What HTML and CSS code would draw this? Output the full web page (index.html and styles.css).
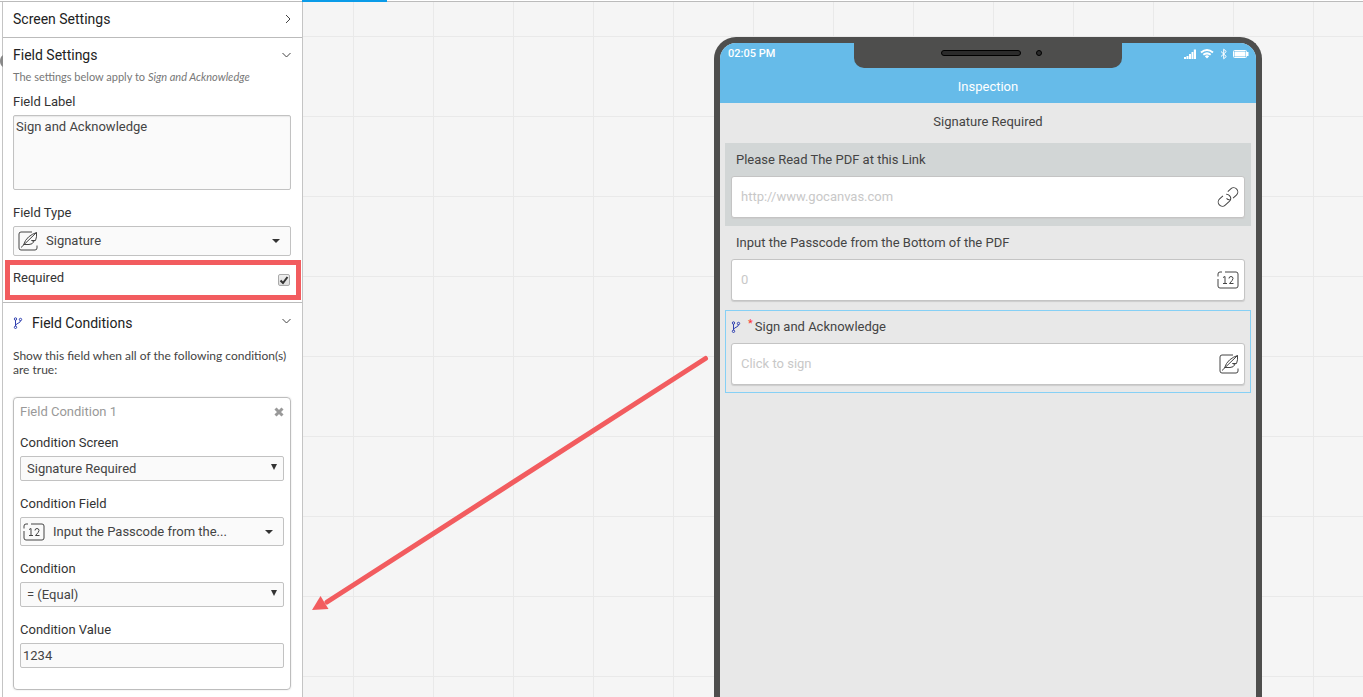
FILE: index.html
```html
<!DOCTYPE html>
<html lang="en">
<head>
<meta charset="utf-8">
<title>Form Builder</title>
<link rel="stylesheet" href="styles.css">
</head>
<body>
<svg class="defs" aria-hidden="true">
  <symbol id="sign" viewBox="0 0 20 20"><path d="M14 1H3Q1 1 1 3V17Q1 19 3 19H17Q19 19 19 17V14.500"/><path d="M3 16.500L18.500 1.500M5.500 14Q7 9 10.500 6Q14 3 18.500 1.500Q19 6 17.500 9.500H13.500L16 10.500Q14.500 13.500 11 13.500H6"/></symbol>
  <symbol id="num" viewBox="0 0 22 18"><path d="M8 1H19Q21 1 21 3V15Q21 17 19 17H3Q1 17 1 15V8M1 5.500V3Q1 1 3 1H5"/><path d="M6 6.500L8 5.500V12.500M6 12.500H10M12 7.500Q12 5.500 14 5.500Q16 5.500 16 7.500Q16 9 12.500 12.500H16.500"/></symbol>
  <symbol id="link" viewBox="0 0 22 20"><g transform="translate(11 10) rotate(-42)"><path d="M-3 -4.200H-7.500A4.200 4.200 0 0 0 -7.500 4.200H-2A4.200 4.200 0 0 0 2 0Q2 -2 .5 -3.200"/><path d="M3 4.200H7.500A4.200 4.200 0 0 0 7.500 -4.200H3.500M-2 0Q-2 2 -.5 3.200"/></g></symbol>
  <symbol id="fork" viewBox="0 0 10 12"><circle cx="2.500" cy="2" r="1.200"/><circle cx="7.500" cy="2.500" r="1.200"/><circle cx="2.500" cy="10.300" r="1.200"/><path d="M2.500 3V9.300M7.500 3.500Q7.500 5.500 5 6.300Q3 7 2.700 8.500"/></symbol>
</svg>

<header class="topbar"><span class="tab"></span></header>
<main class="builder">
  <aside class="rail"><svg class="rail-knob" viewBox="0 0 3 12"><path d="M3 0Q0 2 0 6Q0 10 3 12Z"/></svg></aside>
  <form class="panel">
    <section class="group closed">
      <h2 class="heading">Screen Settings<svg class="chev" viewBox="0 0 10 10"><path d="M5 1L9 5L5 9"/></svg></h2>
    </section>
    <section class="group">
      <h2 class="heading">Field Settings<svg class="chev" viewBox="0 0 10 10"><path d="M1.500 3L5.500 7L9.500 3"/></svg></h2>
      <p class="note">The settings below apply to <em>Sign and Acknowledge</em></p>
      <label class="label" for="flabel">Field Label</label>
      <textarea class="control area" id="flabel">Sign and Acknowledge</textarea>
      <label class="label type-label" for="ftype">Field Type</label>
      <button class="control picker" id="ftype" type="button"><svg class="icon sign"><use href="#sign"/></svg><span class="picked">Signature</span><svg class="caret" viewBox="0 0 8 4"><path d="M0 0H8L4 4Z"/></svg></button>
      <div class="required">
        <label for="req">Required</label>
        <span class="tick"><input type="checkbox" id="req" checked><svg viewBox="0 0 12 12"><path d="M2.500 6.500L5 9L9.500 3"/></svg></span>
      </div>
    </section>
    <section class="group last">
      <h2 class="heading cond"><svg class="icon fork"><use href="#fork"/></svg>Field Conditions<svg class="chev" viewBox="0 0 10 10"><path d="M1.500 1L5.500 5L9.500 1"/></svg></h2>
      <p class="help">Show this field when all of the following condition(s) are true:</p>
      <fieldset class="card">
        <div class="card-head"><span>Field Condition 1</span><button class="close" type="button" aria-label="Remove condition"><svg viewBox="0 0 10 10"><path d="M1.500 1.500L8.500 8.500M8.500 1.500L1.500 8.500"/></svg></button></div>
        <label class="label" for="cscreen">Condition Screen</label>
        <div class="choice"><select class="control" id="cscreen"><option>Signature Required</option></select><svg class="arrow" viewBox="0 0 6 6"><path d="M0 0H6L3 6Z"/></svg></div>
        <label class="label" for="cfield">Condition Field</label>
        <button class="control picker inner" id="cfield" type="button"><svg class="icon num"><use href="#num"/></svg><span class="picked">Input the Passcode from the...</span><svg class="caret" viewBox="0 0 8 4"><path d="M0 0H8L4 4Z"/></svg></button>
        <label class="label" for="cond">Condition</label>
        <div class="choice"><select class="control" id="cond"><option>= (Equal)</option></select><svg class="arrow" viewBox="0 0 6 6"><path d="M0 0H6L3 6Z"/></svg></div>
        <label class="label" for="cval">Condition Value</label>
        <input class="control value" id="cval" type="text" value="1234">
      </fieldset>
    </section>
  </form>
  <section class="canvas">
    <div class="phone">
      <header class="phone-head">
        <div class="status">
          <span class="clock">02:05 PM</span>
          <span class="notch"><span class="speaker"></span><span class="camera"></span></span>
          <svg class="signals" viewBox="0 0 66 12"><path d="M0 9H2V11H0ZM2.500 8H4.500V11H2.500ZM5 6H7V11H5ZM7.500 4H9.300V11H7.500ZM9.800 1.500H12V11H9.800Z"/><path class="wave" d="M17 4.500Q23-.5 29 4.500M19.300 6.800Q23 4 26.700 6.800"/><path d="M20.800 8.200Q23 6.500 25.200 8.200L23 10.500Z"/><path class="blue" d="M37 3.500L42.300 8.500L39.700 10.800V1.200L42.300 3.500L37 8.500"/><rect class="shell" x="49.500" y="2.500" width="13" height="7" rx="1"/><rect x="50.500" y="3.500" width="11" height="5"/><rect x="63" y="4" width="1.500" height="4"/></svg>
        </div>
        <h1 class="title">Inspection</h1>
      </header>
      <h2 class="screen-name">Signature Required</h2>
      <div class="field shaded">
        <label class="field-label" for="url">Please Read The PDF at this Link</label>
        <div class="box"><input id="url" type="text" placeholder="http://www.gocanvas.com"><svg class="icon link"><use href="#link"/></svg></div>
      </div>
      <div class="field">
        <label class="field-label" for="code">Input the Passcode from the Bottom of the PDF</label>
        <div class="box"><input id="code" type="text" placeholder="0"><svg class="icon num"><use href="#num"/></svg></div>
      </div>
      <div class="field selected">
        <label class="field-label" for="ack"><svg class="icon fork"><use href="#fork"/></svg><span class="star">*</span>Sign and Acknowledge</label>
        <div class="box"><input id="ack" type="text" placeholder="Click to sign"><svg class="icon sign"><use href="#sign"/></svg></div>
      </div>
    </div>
    <svg class="pointer" viewBox="0 0 400 256"><path class="shaft" d="M393.500 4.500L15 248"/><path d="M0 256L8.500 242L16.500 255Z"/></svg>
  </section>
</main>
</body>
</html>
```
FILE: styles.css
```css
* { box-sizing: border-box; }
body { margin: 0; height: 100vh; display: flex; flex-direction: column; overflow: hidden; background: #fff; color: #333; font: 13px/16px Roboto, "Liberation Sans", sans-serif; }
h1, h2, p { margin: 0; font-weight: 400; }
input, textarea, select, button { font: inherit; color: inherit; margin: 0; }
.defs { position: absolute; width: 0; height: 0; }
svg { flex: none; }
.icon { fill: none; stroke: #444; stroke-width: 1; }
.sign { width: 20px; height: 20px; }
.num { width: 22px; height: 18px; }
.link { width: 22px; height: 20px; overflow: visible; }
.fork { width: 10px; height: 12px; stroke: #3040b0; }

.topbar { flex: none; height: 2px; border-bottom: 1px solid #bbb; padding-left: 302px; }
.tab { display: block; width: 85px; height: 1px; background: #0a9be8; box-shadow: 0 1px #0a9be8; }
.builder { flex: 1; min-height: 0; display: grid; grid-template-columns: 2px 301px 1fr; }
.rail { position: relative; }
.rail-knob { position: absolute; left: 0; top: 53px; width: 3px; height: 12px; fill: #888; }
.panel { border: solid #c4c4c4; border-width: 0 1px; min-height: 0; overflow: hidden; }

.group { padding: 8px 11px 2px 10px; border-bottom: 1px solid #bbb; }
.closed { padding-bottom: 9px; }
.last { border: 0; padding-top: 11px; }
.heading { display: flex; align-items: center; font-size: 14px; line-height: 18px; font-weight: 400; color: #222; }
.chev { width: 10px; height: 10px; margin-left: auto; fill: none; stroke: #444; overflow: visible; }
.cond { gap: 9px; }
.note { margin-top: 6px; font: 11px/14px Lato, sans-serif; color: #777; }
.label { display: block; color: #333; }
.note + .label { margin-top: 10px; }
.control { display: block; width: 100%; border: 1px solid #c2c2c2; border-radius: 2px; background: #fafafa; color: #444; }
.area { height: 75px; margin-top: 5px; padding: 3px 2px; resize: none; box-shadow: inset 0 1px 1px #e8e8e8; overflow: hidden; }
.type-label { margin-top: 15px; }
.picker { display: flex; align-items: center; height: 30px; margin-top: 5px; padding: 0 10px 0 4px; gap: 8px; text-align: left; }
.picked { flex: 1; white-space: nowrap; }
.caret { width: 8px; height: 4px; fill: #333; }
.required { display: flex; justify-content: space-between; margin: 4px -10px 0 -8px; height: 40px; border: 5px solid #f25c5f; padding: 5px 6px 0 3px; }
.tick { position: relative; width: 12px; height: 12px; margin-top: 4px; }
.tick input { display: block; appearance: none; width: 12px; height: 12px; border: 1px solid #aaa; border-radius: 2px; background: linear-gradient(#eee, #ddd); }
.tick svg { position: absolute; inset: 0; fill: none; stroke: #333; stroke-width: 2; pointer-events: none; }

.help { margin-top: 17px; font: 12px/14px Lato, sans-serif; color: #444; }
.card { margin: 20px 0 0; min-width: 0; padding: 6px 6px 21px; border: 1px solid #bdbdbd; border-radius: 4px; box-shadow: 0 0 2px #ddd; }
.card-head { display: flex; justify-content: space-between; align-items: center; color: #999; }
.close { border: 0; background: none; padding: 0; width: 10px; height: 10px; }
.close svg { display: block; fill: none; stroke: #999; stroke-width: 3; }
.card .label { margin-top: 15px; }
.choice { position: relative; margin-top: 5px; }
.choice select { appearance: none; height: 25px; padding: 0 6px; }
.arrow { position: absolute; right: 7px; top: 8px; width: 6px; height: 6px; fill: #333; pointer-events: none; }
.value { height: 25px; margin-top: 5px; padding: 0 2px; }
.inner { height: 29px; padding-left: 2px; }

.canvas { position: relative; display: flex; justify-content: center; padding: 35px 0 0 310px; min-height: 0; overflow: hidden; background: linear-gradient(#e9e9e9 1px, transparent 1px) 0 34px / 80px 80px, linear-gradient(90deg, #e9e9e9 1px, transparent 1px) 50px 0 / 80px 80px, #f5f5f5; }
.phone { width: 548px; border: solid #4e4e4d; border-width: 6px 6px 0; border-radius: 22px 22px 0 0; background: #e8e8e8; overflow: hidden; }
.phone-head { background: #66bbe9; color: #fff; height: 60px; }
.status { display: grid; grid-template-columns: 1fr 268px 1fr; align-items: start; }
.clock { padding: 4px 0 0 8px; font-size: 11px; line-height: 14px; font-weight: 500; }
.notch { height: 25px; border-radius: 0 0 10px 10px; background: #4e4e4d; display: flex; align-items: flex-start; gap: 15px; padding: 7px 0 0 87px; }
.speaker { width: 80px; height: 6px; border: 1px solid #000; border-radius: 3px; background: #2b2b2b; }
.camera { width: 6px; height: 6px; border: 1px solid #000; border-radius: 50%; background: #2b2b2b; }
.signals { justify-self: end; width: 66px; height: 12px; margin: 5px 6px 0 0; fill: #fff; }
.wave, .blue, .shell { fill: none; stroke: #fff; }
.wave { stroke-width: 2; }
.title { font-size: 13px; line-height: 16px; text-align: center; margin-top: 11px; }
.screen-name { font-size: 13px; line-height: 16px; text-align: center; padding: 11px 0 13px; color: #444; }
.field { margin: 0 5px; padding: 0 5px 7px; border: 1px solid transparent; }
.shaded { background: #d2d6d6; }
.selected { margin-top: 1px; border-color: #86d0f5; }
.field-label { display: flex; align-items: center; height: 32px; padding-left: 5px; color: #444; }
.selected .field-label { padding-left: 0; }
.star { color: #f33; margin: -6px 2px 0 7px; font-size: 11px; }
.box { display: flex; align-items: center; height: 42px; padding: 0 5px 0 9px; border: 1px solid #c4c4c4; border-radius: 3px; background: #fff; box-shadow: 0 1px 1px #ccc; }
.box input { flex: 1; min-width: 0; border: 0; padding: 0; background: none; outline: 0; }
.box input::placeholder { color: #c8c8c8; opacity: 1; }
.pointer { position: absolute; left: 9px; top: 352px; width: 400px; height: 256px; fill: #f25c5f; }
.shaft { fill: none; stroke: #f25c5f; stroke-width: 5; stroke-linecap: round; }
```
